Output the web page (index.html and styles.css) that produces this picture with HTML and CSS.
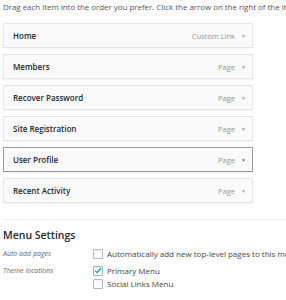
FILE: index.html
```html
<!DOCTYPE html>
<html lang="en">
<head>
    <meta charset="UTF-8">
    <meta name="viewport" content="width=device-width, initial-scale=1.0">
    <title>Menu Structure</title>
    <link rel="stylesheet" href="styles.css">
</head>
<body>

    <p class="intro">Drag each item into the order you prefer. Click the arrow on the right of the item to reveal additional configuration options.</p>

    <ul class="menu">
        <li class="item"><span class="title">Home</span><span class="type">Custom Link</span><span class="arrow">&#9660;</span></li>
        <li class="item"><span class="title">Members</span><span class="type">Page</span><span class="arrow">&#9660;</span></li>
        <li class="item"><span class="title">Recover Password</span><span class="type">Page</span><span class="arrow">&#9660;</span></li>
        <li class="item"><span class="title">Site Registration</span><span class="type">Page</span><span class="arrow">&#9660;</span></li>
        <li class="item active"><span class="title">User Profile</span><span class="type">Page</span><span class="arrow">&#9660;</span></li>
        <li class="item"><span class="title">Recent Activity</span><span class="type">Page</span><span class="arrow">&#9660;</span></li>
    </ul>

    <div class="settings">
        <h3>Menu Settings</h3>

        <div class="row">
            <span class="label">Auto add pages</span>
            <div class="options">
                <label class="check"><span class="box"></span>Automatically add new top-level pages to this menu</label>
            </div>
        </div>

        <div class="row">
            <span class="label">Theme locations</span>
            <div class="options">
                <label class="check"><span class="box checked"><svg viewBox="0 0 10 10" width="9" height="9"><path d="M1.5 5.2 L3.9 7.6 L8.6 2.2" fill="none" stroke="#1e8cbe" stroke-width="1.6"/></svg></span>Primary Menu</label>
                <label class="check"><span class="box"></span>Social Links Menu</label>
            </div>
        </div>
    </div>

</body>
</html>
```

FILE: styles.css
```css
body {
    margin: 0;
    font-family: "Open Sans", sans-serif;
    background-color: #fff;
    color: #444;
    overflow: hidden;
}
.intro {
    margin: 0;
    padding: 2px 0 0 3px;
    font-size: 7.9px;
    line-height: 10px;
    color: #555;
    white-space: nowrap;
    overflow: hidden;
}
.menu {
    list-style: none;
    margin: 11px 0 0 3px;
    padding: 0;
    width: 250px;
    display: flex;
    flex-direction: column;
    gap: 6px;
}
.item {
    box-sizing: border-box;
    height: 25px;
    display: flex;
    align-items: center;
    padding: 0 6px 0 9px;
    border: 1px solid #e5e5e5;
    background-color: #fafafa;
    box-shadow: 0 1px 1px rgba(0, 0, 0, 0.04);
}
.item.active {
    border-color: #999;
}
.title {
    flex: 1;
    font-size: 8px;
    font-weight: 600;
    color: #23282d;
}
.type {
    font-size: 7.5px;
    color: #8f9498;
}
.arrow {
    margin-left: 6px;
    font-size: 5px;
    color: #a0a5aa;
}
.item.active .arrow {
    color: #72777c;
}
.settings {
    margin-top: 16px;
    margin-left: 3px;
    border-top: 1px solid #eee;
}
.settings h3 {
    margin: 8px 0 4px;
    font-size: 10.5px;
    font-weight: 600;
    color: #23282d;
    line-height: 15px;
}
.row {
    display: flex;
    margin-bottom: 4px;
}
.label {
    flex: 0 0 90px;
    font-size: 7px;
    font-style: italic;
    color: #666;
    line-height: 13px;
}
.options {
    display: flex;
    flex-direction: column;
}
.check {
    display: flex;
    align-items: center;
    gap: 4px;
    font-size: 8px;
    color: #444;
    line-height: 13px;
    white-space: nowrap;
}
.box {
    box-sizing: border-box;
    width: 10px;
    height: 10px;
    border: 1px solid #b4b9be;
    border-radius: 1px;
    background-color: #fff;
    box-shadow: inset 0 1px 2px rgba(0, 0, 0, 0.07);
    display: flex;
    align-items: center;
    justify-content: center;
}
.box.checked {
    border-color: #8fb5d4;
}
```
